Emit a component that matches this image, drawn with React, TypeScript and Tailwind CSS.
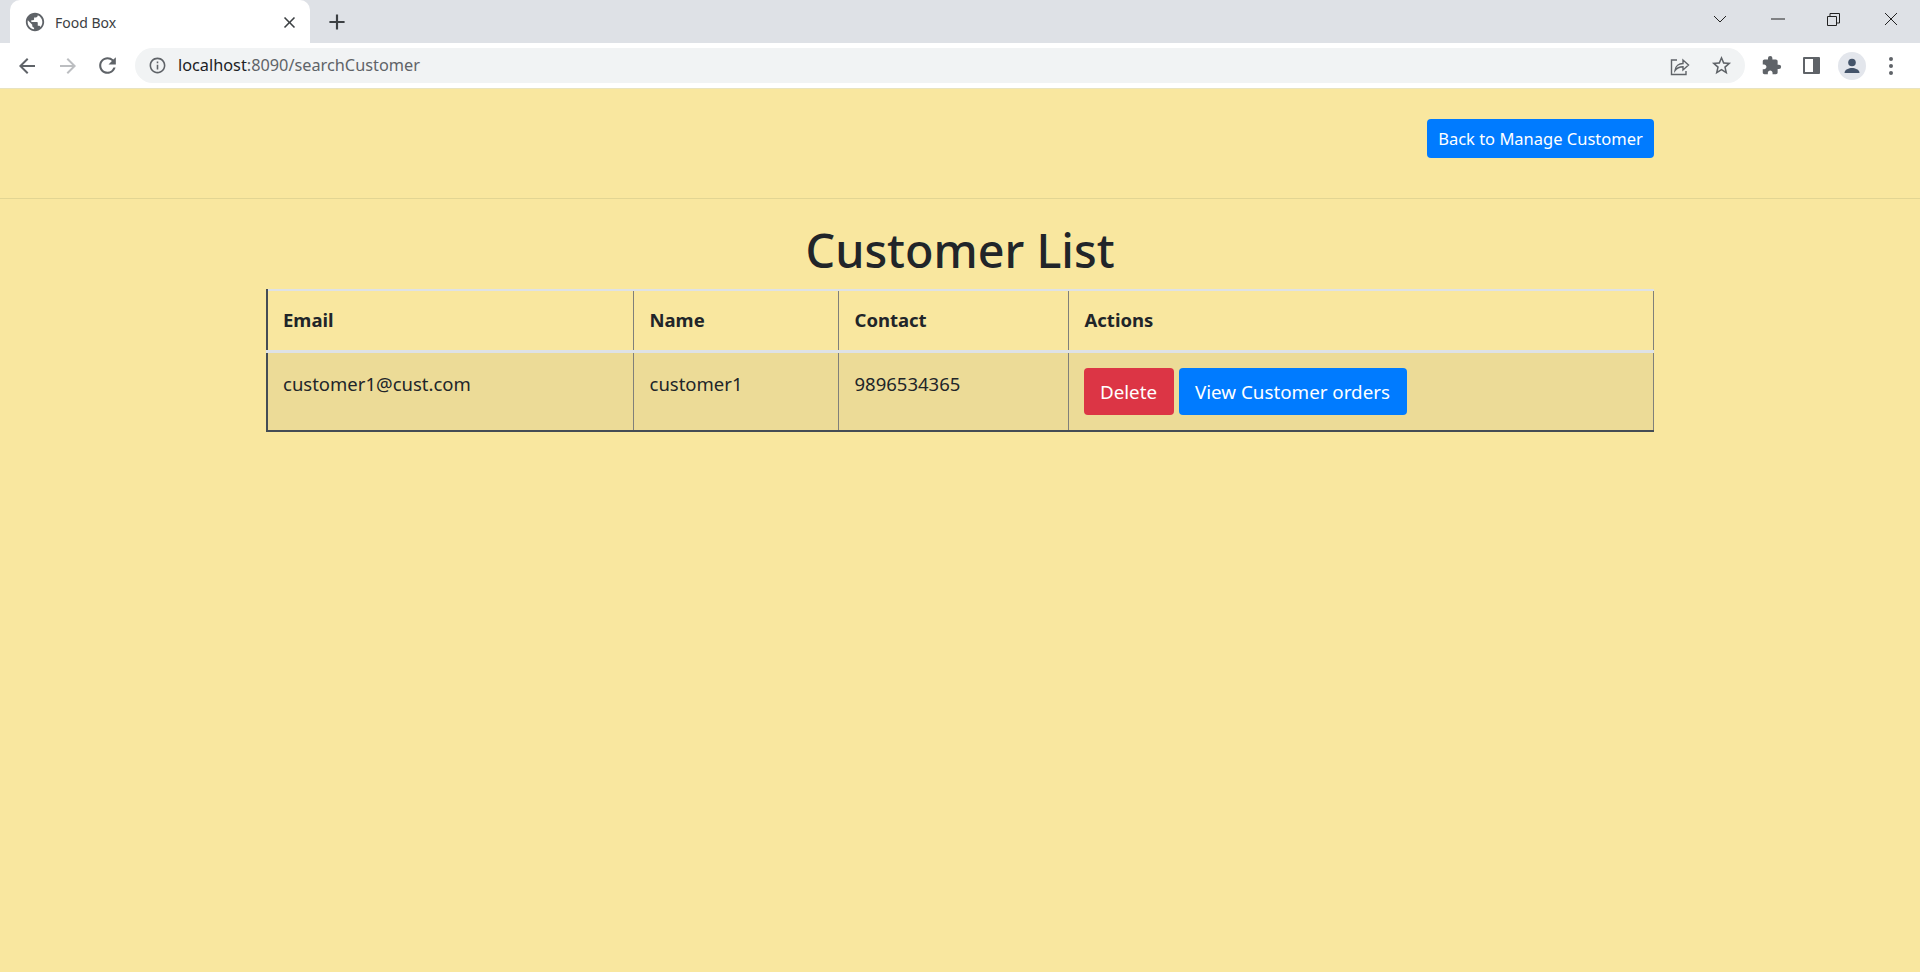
import { MdArrowBack, MdArrowForward, MdClose, MdAdd, MdExtension, MdInfoOutline, MdPublic, MdRefresh, MdStarBorder } from "react-icons/md";

const font = "font-['Noto_Sans','Open_Sans',sans-serif]";

function BrowserChrome() {
  return (
    <div className={`flex flex-col ${font}`}>
      {/* tab strip */}
      <div className="flex h-[43px] items-end bg-[#dee1e6] pl-[10px]">
        <div className="flex h-[43px] w-[300px] items-center rounded-t-[10px] bg-white pl-[14px] pr-[11px] pt-[1px]">
          <MdPublic size={22} className="text-[#5f6368]" />
          <span className="ml-[9px] flex-1 text-[14px] text-[#3c4043]">Food Box</span>
          <MdClose size={19} className="text-[#3c4043]" />
        </div>
        <div className="ml-[14px] flex h-[43px] w-[26px] items-center justify-center pt-[1px]">
          <MdAdd size={26} className="text-[#3c4043]" />
        </div>
        {/* window controls */}
        <div className="ml-auto flex h-[43px] items-center pb-[5px]">
          <svg width="14" height="8" viewBox="0 0 14 8" fill="none" stroke="#222" strokeWidth="1">
            <path d="M1 1l6 6 6-6" />
          </svg>
          <svg className="ml-[44px]" width="14" height="2" viewBox="0 0 14 2" fill="none" stroke="#222" strokeWidth="1">
            <path d="M0 1h14" />
          </svg>
          <svg className="ml-[42px]" width="13" height="13" viewBox="0 0 13 13" fill="none" stroke="#222" strokeWidth="1">
            <path d="M.5 3.500h9v9h-9zM3 3.500V.500h9.500V10H9.500" />
          </svg>
          <svg className="ml-[44px] mr-[22px]" width="14" height="14" viewBox="0 0 14 14" fill="none" stroke="#222" strokeWidth="1">
            <path d="M1 1l12 12M13 1L1 13" />
          </svg>
        </div>
      </div>
      {/* toolbar */}
      <div className="flex h-[45px] items-center bg-white">
        <MdArrowBack size={24} className="ml-[15px] text-[#5f6368]" />
        <MdArrowForward size={24} className="ml-[17px] text-[#bcbec1]" />
        <MdRefresh size={25} className="ml-[15px] text-[#5f6368]" />
        <div className="ml-[15px] flex h-[35px] w-[1610px] items-center rounded-full bg-[#f1f3f4] pl-[13px] pr-[12px]">
          <MdInfoOutline size={19} className="text-[#5f6368]" />
          <span className="ml-[11px] text-[16.300px] text-[#202124]">
            localhost<span className="text-[#5f6368]">:8090/searchCustomer</span>
          </span>
          <svg className="ml-auto" width="20" height="20" viewBox="0 0 20 20" fill="none" stroke="#5f6368" strokeWidth="1.400">
            <path d="M7 4H1.500v14.500H16V15" />
            <path d="M5 14.500c.5-4.500 4-7 8-7V4l5.500 5-5.500 5v-3.300c-3.500 0-6 1-8 3.800z" />
          </svg>
          <MdStarBorder size={23} className="ml-[20px] text-[#5f6368]" />
        </div>
        <MdExtension size={21} className="ml-[16px] text-[#5f6368]" />
        <div className="ml-[21px] flex h-[17px] w-[17px] rounded-[1px] bg-[#5f6368] p-[2px] pr-[7px]">
          <div className="h-full w-full bg-white" />
        </div>
        <div className="ml-[18px] flex h-[28px] w-[28px] items-center justify-center rounded-full bg-[#e3e6ec]">
          <svg width="18" height="18" viewBox="0 0 18 18" fill="#44546a">
            <circle cx="9" cy="5.500" r="3.800" />
            <path d="M1.500 16c0-3.600 4.500-5 7.500-5s7.500 1.400 7.500 5z" />
          </svg>
        </div>
        <div className="ml-[23px] flex flex-col gap-[3px]">
          <div className="h-[4px] w-[4px] rounded-full bg-[#5f6368]" />
          <div className="h-[4px] w-[4px] rounded-full bg-[#5f6368]" />
          <div className="h-[4px] w-[4px] rounded-full bg-[#5f6368]" />
        </div>
      </div>
    </div>
  );
}

export default function App() {
  return (
    <div className={`flex h-[972px] flex-col overflow-hidden bg-[#f9e79f] ${font} text-[#212529]`}>
      <BrowserChrome />
      <div className="h-px bg-[#e8e3c0]" />

      {/* header */}
      <div className="flex h-[110px] items-start justify-end border-b border-[#e2d593] pr-[266px] pt-[30px]">
        <button type="button" className="h-[39px] w-[227px] rounded-[4px] bg-[#007bff] pt-[1px] text-[16.500px] text-white">
          Back to Manage Customer
        </button>
      </div>

      <h1 className="mt-[23px] text-center text-[46.700px] leading-[56px] font-medium">Customer List</h1>

      {/* table */}
      <table className="mx-[266px] mt-[11px] w-[1388px] table-fixed border-collapse text-[18.500px]">
        <thead>
          <tr className="h-[61px] border-b-[3px] border-t-[2px] border-[#dee2e6] text-left">
            <th className="w-[366px] border-l-[2px] border-l-[#454d55] px-[15px] font-bold">Email</th>
            <th className="w-[205px] border-l border-l-[#80807a] px-[16px] font-bold">Name</th>
            <th className="w-[230px] border-l border-l-[#80807a] px-[16px] font-bold">Contact</th>
            <th className="border-x border-x-[#80807a] px-[16px] font-bold">Actions</th>
          </tr>
        </thead>
        <tbody>
          <tr className="h-[80px] border-b-[2px] border-[#454d55] bg-[#ecdb97] align-top">
            <td className="border-l-[2px] border-l-[#454d55] px-[15px] pt-[17px]">customer1@cust.com</td>
            <td className="border-l border-l-[#80807a] px-[16px] pt-[17px]">customer1</td>
            <td className="border-l border-l-[#80807a] px-[16px] pt-[17px]">9896534365</td>
            <td className="border-x border-x-[#80807a] px-[15px] pt-[15px]">
              <div className="flex gap-[5px]">
                <button type="button" className="h-[47px] w-[90px] rounded-[4px] bg-[#dc3545] pt-[3px] text-[18.800px] text-white">
                  Delete
                </button>
                <button type="button" className="h-[47px] w-[228px] rounded-[4px] bg-[#007bff] pt-[3px] text-[18.800px] text-white">
                  View Customer orders
                </button>
              </div>
            </td>
          </tr>
        </tbody>
      </table>
    </div>
  );
}
